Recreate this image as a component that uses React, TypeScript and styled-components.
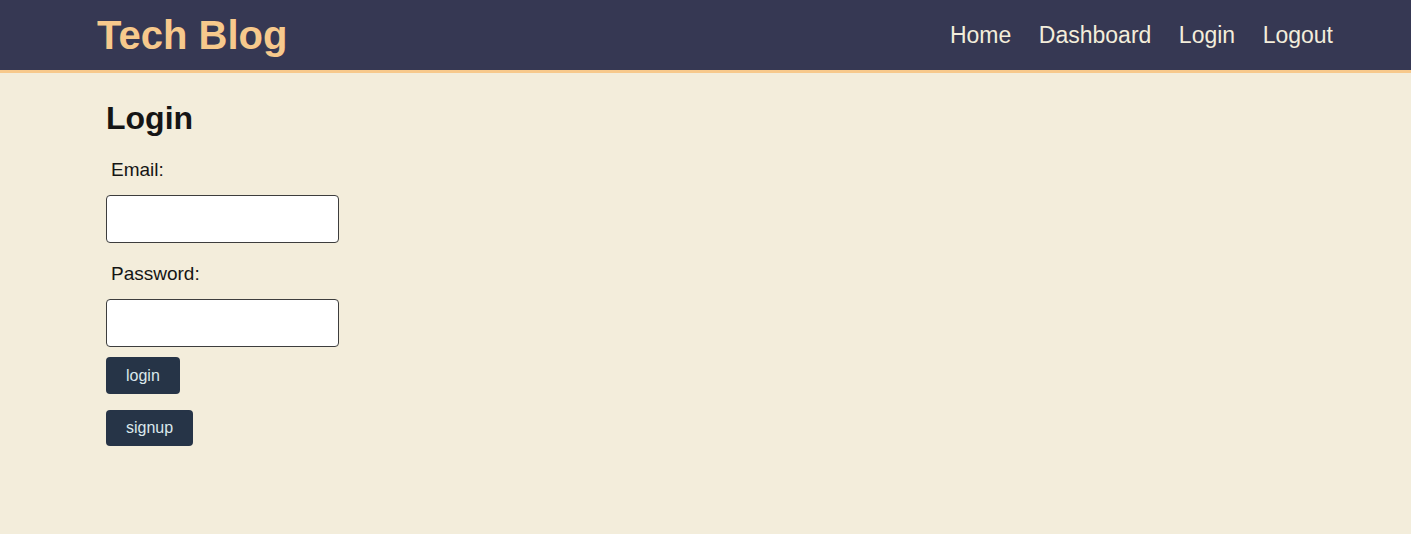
import React from "react";
import styled, { createGlobalStyle } from "styled-components";

const GlobalStyle = createGlobalStyle`
  html, body {
    margin: 0;
    padding: 0;
    background: #f3eddb;
    font-family: "Liberation Sans", Arial, sans-serif;
  }
  * { box-sizing: border-box; }
`;

const Page = styled.div`
  min-height: 534px;
  background: #f3eddb;
`;

const Header = styled.header`
  height: 73px;
  background: #363853;
  border-bottom: 3px solid #f7c98c;
  display: flex;
  align-items: center;
  justify-content: space-between;
  padding: 0 78px 0 97px;
`;

const Title = styled.h1`
  margin: 0;
  font-size: 40px;
  font-weight: 700;
  color: #f7c98c;
  line-height: 1;
  padding-bottom: 1px;
`;

const Nav = styled.nav`
  display: flex;
  gap: 27.5px;
`;

const NavLink = styled.a`
  color: #f3eddb;
  font-size: 23px;
  text-decoration: none;
  line-height: 1;
`;

const Main = styled.main`
  padding: 27px 0 0 106px;
`;

const Heading = styled.h2`
  margin: 0 0 3px;
  font-size: 32px;
  font-weight: 700;
  color: #151515;
  line-height: 36px;
`;

const Form = styled.form`
  display: flex;
  flex-direction: column;
  align-items: flex-start;
`;

const Label = styled.label`
  display: block;
  font-size: 19px;
  line-height: 20px;
  color: #151515;
  padding-left: 5px;
  margin: 21px 0 15px;
`;

const Input = styled.input`
  width: 233px;
  height: 48px;
  background: #ffffff;
  border: 1px solid #3d3d3d;
  border-radius: 4px;
  outline: none;
  padding: 0 8px;
  font-size: 16px;
`;

const Button = styled.button<{ $top: number; $height: number }>`
  margin-top: ${(p) => p.$top}px;
  height: ${(p) => p.$height}px;
  padding: 0 20px;
  background: #263447;
  color: #dbe8ec;
  border: none;
  border-radius: 4px;
  font-family: "Liberation Sans", Arial, sans-serif;
  font-size: 16px;
  cursor: pointer;
`;

export default function App() {
  return (
    <Page>
      <GlobalStyle />
      <Header>
        <Title>Tech Blog</Title>
        <Nav>
          <NavLink href="#">Home</NavLink>
          <NavLink href="#">Dashboard</NavLink>
          <NavLink href="#">Login</NavLink>
          <NavLink href="#">Logout</NavLink>
        </Nav>
      </Header>
      <Main>
        <Heading>Login</Heading>
        <Form onSubmit={(e) => e.preventDefault()}>
          <Label htmlFor="email">Email:</Label>
          <Input id="email" type="email" />
          <Label htmlFor="password">Password:</Label>
          <Input id="password" type="password" />
          <Button $top={10} $height={37} type="submit">login</Button>
          <Button $top={16} $height={36} type="button">signup</Button>
        </Form>
      </Main>
    </Page>
  );
}
